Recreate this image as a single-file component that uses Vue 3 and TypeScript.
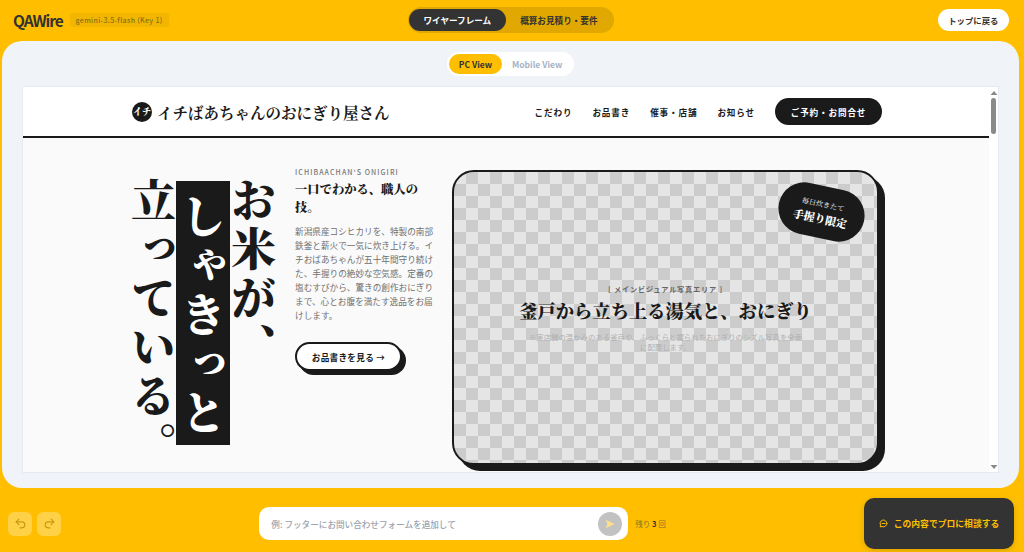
<script setup lang="ts">
const navItems = ['こだわり', 'お品書き', '催事・店舗', 'お知らせ']
</script>

<template>
  <div class="app-shell">
    <header class="top-bar">
      <div class="brand">
        <span class="brand-name">QAWire</span>
        <span class="model-tag">gemini-3.5-flash (Key 1)</span>
      </div>
      <div class="mode-tabs">
        <button class="mode-tab active">ワイヤーフレーム</button>
        <button class="mode-tab">概算お見積り・要件</button>
      </div>
      <div class="top-actions">
        <button class="back-button">トップに戻る</button>
      </div>
    </header>

    <main class="stage">
      <div class="view-switch">
        <button class="view-option active">PC View</button>
        <button class="view-option">Mobile View</button>
      </div>

      <div class="preview-frame">
        <div class="preview-page">
          <div class="site-header">
            <div class="site-header-inner">
              <div class="site-logo">
                <span class="logo-mark">イチ</span>
                <span class="logo-text">イチばあちゃんのおにぎり屋さん</span>
              </div>
              <nav class="site-nav">
                <a v-for="item in navItems" :key="item">{{ item }}</a>
                <button class="reserve-button">ご予約・お問合せ</button>
              </nav>
            </div>
          </div>

          <section class="hero">
            <h1 class="hero-title">お米が、<span class="title-bar">しゃきっと</span>立っている。</h1>
            <div class="hero-copy">
              <p class="eyebrow">ICHIBAACHAN'S ONIGIRI</p>
              <h2 class="copy-title">一口でわかる、職人の技。</h2>
              <p class="copy-text">新潟県産コシヒカリを、特製の南部鉄釜と薪火で一気に炊き上げる。イチおばあちゃんが五十年間守り続けた、手握りの絶妙な空気感。定番の塩むすびから、驚きの創作おにぎりまで、心とお腹を満たす逸品をお届けします。</p>
              <button class="menu-button">お品書きを見る →</button>
            </div>
            <div class="hero-visual">
              <div class="visual-badge">
                <span class="badge-small">毎日炊きたて</span>
                <span class="badge-large">手握り限定</span>
              </div>
              <p class="visual-label">[ メインビジュアル写真エリア ]</p>
              <p class="visual-title">釜戸から立ち上る湯気と、おにぎり</p>
              <p class="visual-note">※実店舗の温かみのある釜戸や、ふっくらと握られたおにぎりのシズル写真を全面に配置します。</p>
            </div>
          </section>
        </div>

        <div class="fake-scrollbar">
          <svg width="8" height="6" viewBox="0 0 8 6"><path d="M4 1 7.5 5h-7z" fill="#8a8a8a" /></svg>
          <div class="scroll-track"><div class="scroll-thumb"></div></div>
          <svg width="8" height="6" viewBox="0 0 8 6"><path d="M4 5 .5 1h7z" fill="#8a8a8a" /></svg>
        </div>
      </div>
    </main>

    <footer class="bottom-bar">
      <div class="history-buttons">
        <button class="history-button">
          <svg width="13" height="13" viewBox="0 0 24 24" fill="none" stroke="currentColor" stroke-width="2" stroke-linecap="round" stroke-linejoin="round"><path d="M9 14 4 9l5-5" /><path d="M4 9h10.5a5.5 5.5 0 0 1 0 11H11" /></svg>
        </button>
        <button class="history-button">
          <svg width="13" height="13" viewBox="0 0 24 24" fill="none" stroke="currentColor" stroke-width="2" stroke-linecap="round" stroke-linejoin="round"><path d="m15 14 5-5-5-5" /><path d="M20 9H9.5a5.5 5.5 0 0 0 0 11H13" /></svg>
        </button>
      </div>
      <div class="prompt-area">
        <div class="prompt-box">
          <span class="prompt-placeholder">例: フッターにお問い合わせフォームを追加して</span>
          <button class="send-button">
            <svg width="10" height="10" viewBox="0 0 12 12"><path d="M1 1 11.5 6 1 11 3 6z" fill="#ffdf8a" /></svg>
          </button>
        </div>
        <span class="remaining">残り <b>3</b> 回</span>
      </div>
      <button class="consult-button">
        <svg width="9" height="9" viewBox="0 0 24 24" fill="none" stroke="currentColor" stroke-width="2.6" stroke-linecap="round" stroke-linejoin="round"><path d="M21 12a9 9 0 0 1-13 8l-5 1 1.4-4.4A9 9 0 1 1 21 12z" /><path d="M8 12h8" /></svg>
        この内容でプロに相談する
      </button>
    </footer>
  </div>
</template>

<style scoped>
.app-shell {
  display: grid;
  grid-template-rows: 41px 447px 64px;
  width: 1024px;
  height: 552px;
  overflow: hidden;
  background: #ffbf00;
  color: #333;
  font-family: "Noto Sans CJK JP", "Noto Sans", sans-serif;
}

button {
  border: 0;
  padding: 0;
  font-family: inherit;
  cursor: pointer;
}

.top-bar {
  display: grid;
  grid-template-columns: 1fr auto 1fr;
  align-items: center;
  padding: 0 15px 1px 13px;
}

.brand {
  display: flex;
  align-items: center;
  gap: 7px;
}

.brand-name {
  font-size: 15.5px;
  font-weight: 700;
  letter-spacing: -1.1px;
  color: #333;
}

.model-tag {
  display: inline-flex;
  align-items: center;
  height: 14px;
  padding: 0 6px;
  border-radius: 3px;
  background: rgba(0, 0, 0, 0.05);
  color: #8a7216;
  font-size: 7px;
  font-weight: 500;
  letter-spacing: 0.35px;
}

.mode-tabs {
  display: flex;
  padding: 2px 2px 2px 1px;
  border-radius: 999px;
  background: #e0a800;
}

.mode-tab {
  height: 22px;
  padding: 0 14.5px;
  border-radius: 999px;
  background: transparent;
  color: #333;
  font-size: 8.6px;
  font-weight: 700;
}

.mode-tab.active {
  background: #333;
  color: #fff;
}

.top-actions {
  display: flex;
  justify-content: flex-end;
}

.back-button {
  height: 22px;
  padding: 0 10.5px;
  border-radius: 999px;
  background: #fff;
  color: #333;
  font-size: 8.4px;
  font-weight: 700;
}

.stage {
  display: flex;
  flex-direction: column;
  align-items: center;
  gap: 11px;
  margin: 0 5px 0 2px;
  padding: 11px 21px 16px;
  border-radius: 20px;
  background: #f0f4f8;
}

.view-switch {
  display: flex;
  flex-shrink: 0;
  box-sizing: border-box;
  height: 24px;
  padding: 2px;
  border-radius: 999px;
  background: #fff;
}

.view-option {
  padding: 0 10px;
  border-radius: 999px;
  background: transparent;
  color: #a6b1c5;
  font-size: 8.5px;
  font-weight: 700;
}

.view-option.active {
  background: #ffbf00;
  color: #333;
}

.preview-frame {
  display: flex;
  flex: 1;
  width: 100%;
  min-height: 0;
  overflow: hidden;
  background: #fff;
  box-shadow: 0 0 0 1px #e6ebf2;
}

.preview-page {
  flex: 1;
  min-width: 0;
  background: #fafafa;
}

.site-header {
  box-sizing: border-box;
  height: 51px;
  border-bottom: 2px solid #1a1a1a;
  background: #fff;
}

.site-header-inner {
  display: flex;
  align-items: center;
  justify-content: space-between;
  width: 750px;
  height: 100%;
  margin-left: 109px;
}

.site-logo {
  display: flex;
  align-items: center;
  gap: 5px;
}

.logo-mark {
  display: flex;
  align-items: center;
  justify-content: center;
  width: 20px;
  height: 20px;
  border-radius: 50%;
  background: #1a1a1a;
  color: #fff;
  font-family: "Noto Serif CJK JP", "Noto Sans CJK JP", serif;
  font-size: 9px;
  font-weight: 900;
  white-space: nowrap;
}

.logo-text {
  color: #1a1a1a;
  font-family: "Noto Serif CJK JP", "Noto Sans CJK JP", serif;
  font-size: 15.5px;
  font-weight: 700;
}

.site-nav {
  display: flex;
  align-items: center;
  gap: 20px;
}

.site-nav a {
  color: #1a1a1a;
  font-size: 8.6px;
  font-weight: 700;
  letter-spacing: 0.85px;
}

.reserve-button {
  width: 107px;
  height: 27px;
  border-radius: 999px;
  background: #1a1a1a;
  color: #fff;
  font-size: 8.6px;
  font-weight: 700;
  letter-spacing: 0.85px;
}

.hero {
  display: flex;
  align-items: flex-start;
  width: 750px;
  margin-left: 109px;
  padding-top: 29px;
}

.hero-title {
  flex-shrink: 0;
  width: 144px;
  height: 300px;
  margin: 10px 19px 0 0;
  color: #1a1a1a;
  font-family: "Noto Serif CJK JP", "Noto Sans CJK JP", serif;
  font-size: 45px;
  font-weight: 900;
  letter-spacing: 4px;
  line-height: 46px;
  writing-mode: vertical-rl;
}

.title-bar {
  display: inline-block;
  margin-top: 4px;
  padding: 13px 4px 6px;
  background: #1a1a1a;
  color: #fff;
}

.hero-copy {
  flex-shrink: 0;
  width: 138px;
  margin-right: 19px;
}

.eyebrow {
  margin: 0 0 3px;
  color: #777;
  font-size: 7px;
  font-weight: 500;
  letter-spacing: 1.1px;
}

.copy-title {
  margin: 0 0 8px;
  color: #1a1a1a;
  font-family: "Noto Serif CJK JP", "Noto Sans CJK JP", serif;
  font-size: 12.3px;
  font-weight: 900;
  line-height: 18px;
}

.copy-text {
  margin: 0 0 20px;
  color: #707070;
  font-size: 8.64px;
  line-height: 14px;
}

.menu-button {
  display: block;
  width: 107px;
  height: 29px;
  border: 2px solid #1a1a1a;
  border-radius: 999px;
  background: #fff;
  box-shadow: 4px 4px 0 #1a1a1a;
  color: #1a1a1a;
  font-size: 8.6px;
  font-weight: 700;
  letter-spacing: 0.3px;
}

.hero-visual {
  position: relative;
  display: flex;
  flex-direction: column;
  align-items: center;
  justify-content: center;
  flex-shrink: 0;
  box-sizing: border-box;
  width: 427px;
  height: 295px;
  margin-top: 3px;
  border: 2px solid #1a1a1a;
  border-radius: 22px;
  background-color: #e5e5e5;
  background-image: conic-gradient(#ccc 25%, transparent 0 50%, #ccc 0 75%, transparent 0);
  background-size: 24px 24px;
  box-shadow: 6px 6px 0 #1a1a1a;
  text-align: center;
}

.visual-badge {
  position: absolute;
  top: 14px;
  right: 12px;
  display: flex;
  flex-direction: column;
  align-items: center;
  justify-content: center;
  gap: 2px;
  width: 87px;
  height: 52px;
  border-radius: 999px;
  background: #1a1a1a;
  color: #fff;
  font-family: "Noto Serif CJK JP", "Noto Sans CJK JP", serif;
  transform: rotate(12deg);
}

.badge-small {
  font-size: 7.2px;
  line-height: 10px;
}

.badge-large {
  font-size: 11px;
  font-weight: 900;
  line-height: 14px;
}

.visual-label {
  margin: 0 0 3px;
  color: #666;
  font-size: 7.2px;
  font-weight: 700;
  letter-spacing: 0.8px;
}

.visual-title {
  margin: 0 0 9px;
  color: #1a1a1a;
  font-family: "Noto Serif CJK JP", "Noto Sans CJK JP", serif;
  font-size: 18.3px;
  font-weight: 900;
  line-height: 26px;
  white-space: nowrap;
}

.visual-note {
  width: 278px;
  margin: 0;
  color: #b0b0b0;
  font-size: 7.4px;
  line-height: 10px;
}

.fake-scrollbar {
  display: flex;
  flex-direction: column;
  align-items: center;
  flex-shrink: 0;
  width: 9px;
  padding: 3px 0 2px;
  background: #fff;
}

.scroll-track {
  flex: 1;
  width: 100%;
  padding-top: 2px;
}

.scroll-thumb {
  width: 5px;
  height: 36px;
  margin: 0 auto;
  border-radius: 3px;
  background: #8a8a8a;
}

.bottom-bar {
  display: flex;
  align-items: center;
  justify-content: space-between;
  padding: 7px 10px 0 8px;
}

.history-buttons {
  display: flex;
  gap: 5px;
}

.history-button {
  display: flex;
  align-items: center;
  justify-content: center;
  width: 24px;
  height: 24px;
  border-radius: 6px;
  background: rgba(255, 255, 255, 0.28);
  color: #c9980f;
}

.prompt-area {
  display: flex;
  align-items: center;
  gap: 7px;
}

.prompt-box {
  display: flex;
  align-items: center;
  justify-content: space-between;
  box-sizing: border-box;
  width: 369px;
  height: 33px;
  padding: 0 6px 0 12px;
  border-radius: 10px;
  background: #fff;
}

.prompt-placeholder {
  color: #9ca3af;
  font-size: 8.6px;
  font-weight: 500;
}

.send-button {
  display: flex;
  align-items: center;
  justify-content: center;
  width: 24px;
  height: 24px;
  border-radius: 50%;
  background: #c2c2c2;
}

.remaining {
  color: #8a7320;
  font-size: 7.5px;
  white-space: nowrap;
}

.remaining b {
  color: #333;
}

.consult-button {
  display: flex;
  align-items: center;
  justify-content: center;
  gap: 6px;
  width: 150px;
  height: 51px;
  border-radius: 10px;
  background: #333;
  box-shadow: 0 2px 6px rgba(0, 0, 0, 0.15);
  color: #ffbf00;
  font-size: 8.8px;
  font-weight: 700;
}
</style>
